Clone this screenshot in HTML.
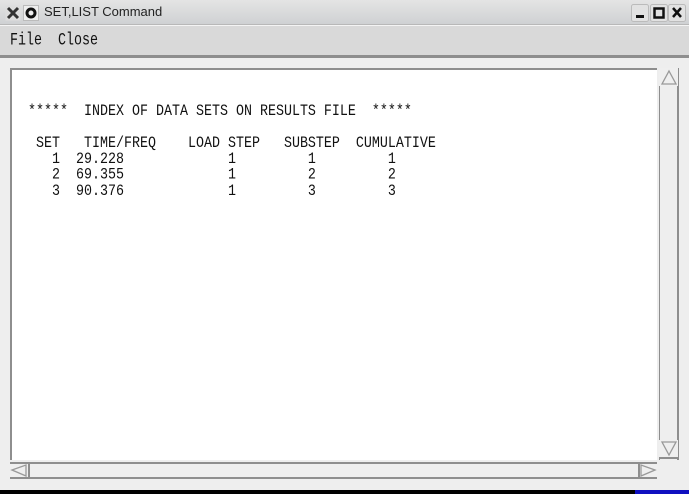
<!DOCTYPE html>
<html><head><meta charset="utf-8"><style>
*{margin:0;padding:0;box-sizing:border-box}
html,body{width:689px;height:494px;overflow:hidden;background:#000}
#win{position:absolute;left:0;top:0;width:689px;height:490px;background:#eeeeee}
#title{position:absolute;left:0;top:0;width:689px;height:25px;background:linear-gradient(#e4e4e4,#cfd1d3);border-bottom:1px solid #b8b8b8}
#title .t{position:absolute;left:44px;top:4px;font:13px "Liberation Sans",sans-serif;color:#222}
#menu{position:absolute;left:0;top:25px;width:689px;height:33px;background:#d9d9d9;border-bottom:3px solid #8e8e8e;border-top:1px solid #f4f4f4}
#menu span{position:absolute;top:5px;font:13.33px/16px "Liberation Mono",monospace;color:#111;transform:scaleY(1.35);transform-origin:0 0}
#txt{position:absolute;left:10px;top:68px;width:647px;height:392px;background:#fff;border-top:2px solid #8e8e8e;border-left:2px solid #8e8e8e}
pre{position:absolute;left:16px;top:34px;font:13.33px/13.33px "Liberation Mono",monospace;color:#111;transform:scaleY(1.2);transform-origin:0 0}
#vs{position:absolute;left:657px;top:68px;width:24px;height:392px;background:#eeeeee}
#hs{position:absolute;left:10px;top:462px;width:647px;height:17px;background:#eeeeee}
</style></head><body>
<div id="win">
<div id="title">
<svg style="position:absolute;left:5px;top:5px" width="36" height="16">
<rect x="0.5" y="0.5" width="15" height="15" fill="#ddd" stroke="none"/>
<path d="M3 3 L13 13 M13 3 L3 13" stroke="#333" stroke-width="3"/>
<rect x="18.5" y="0.5" width="15" height="15" fill="#eee" stroke="#bbb"/>
<circle cx="26" cy="8" r="4" fill="none" stroke="#111" stroke-width="3"/>
</svg>
<span class="t">SET,LIST Command</span>
<svg style="position:absolute;left:631px;top:4px" width="56" height="18">
<rect x="0.5" y="0.5" width="17" height="17" rx="2" fill="#e2e2e2" stroke="#bbb"/>
<rect x="5" y="11" width="8" height="3" fill="#111"/>
<rect x="19.5" y="0.5" width="17" height="17" rx="2" fill="#e2e2e2" stroke="#bbb"/>
<rect x="23.5" y="4.5" width="9" height="9" fill="none" stroke="#111" stroke-width="2.5"/>
<rect x="37.5" y="0.5" width="17" height="17" rx="2" fill="#e2e2e2" stroke="#bbb"/>
<path d="M42 4 L50 13 M50 4 L42 13" stroke="#111" stroke-width="2.5"/>
</svg>
</div>
<div id="menu"><span style="left:10px">File</span><span style="left:58px">Close</span></div>
<div id="txt"><pre>*****  INDEX OF DATA SETS ON RESULTS FILE  *****

 SET   TIME/FREQ    LOAD STEP   SUBSTEP  CUMULATIVE
   1  29.228             1         1         1
   2  69.355             1         2         2
   3  90.376             1         3         3</pre></div>
<div id="vs">
<div style="position:absolute;left:2px;top:0;width:20px;height:392px;border-left:1px solid #8e8e8e;border-right:2px solid #8e8e8e"></div>
<svg style="position:absolute;left:2px;top:0" width="20" height="20"><rect x="0" y="0" width="19" height="18" fill="#efefef"/><path d="M10 3 L17 16 L3 16 Z" fill="none" stroke="#999" stroke-width="1.3"/></svg>
<svg style="position:absolute;left:2px;top:372px" width="20" height="20"><rect x="0" y="0" width="19" height="18" fill="#efefef"/><path d="M3 2 L17 2 L10 15 Z" fill="none" stroke="#999" stroke-width="1.3"/><line x1="0" y1="18" x2="20" y2="18" stroke="#8e8e8e" stroke-width="2"/></svg>
</div>
<div id="hs">
<div style="position:absolute;left:0;top:0;width:647px;height:17px;border-top:2px solid #8e8e8e;border-bottom:2px solid #8e8e8e;border-left:1px solid #8e8e8e"></div>
<svg style="position:absolute;left:0;top:2px" width="20" height="13"><rect width="18" height="13" fill="#efefef"/><path d="M2 6 L16 1 L16 12 Z" fill="none" stroke="#999" stroke-width="1.3"/><line x1="19" y1="0" x2="19" y2="13" stroke="#8e8e8e" stroke-width="2"/></svg>
<svg style="position:absolute;left:628px;top:2px" width="19" height="13"><rect width="19" height="13" fill="#efefef"/><path d="M17 6 L3 1 L3 12 Z" fill="none" stroke="#999" stroke-width="1.3"/><line x1="1" y1="0" x2="1" y2="13" stroke="#8e8e8e" stroke-width="2"/></svg>
</div>
</div>
<div style="position:absolute;left:635px;top:490px;width:54px;height:4px;background:#1010c0"></div>
</body></html>
